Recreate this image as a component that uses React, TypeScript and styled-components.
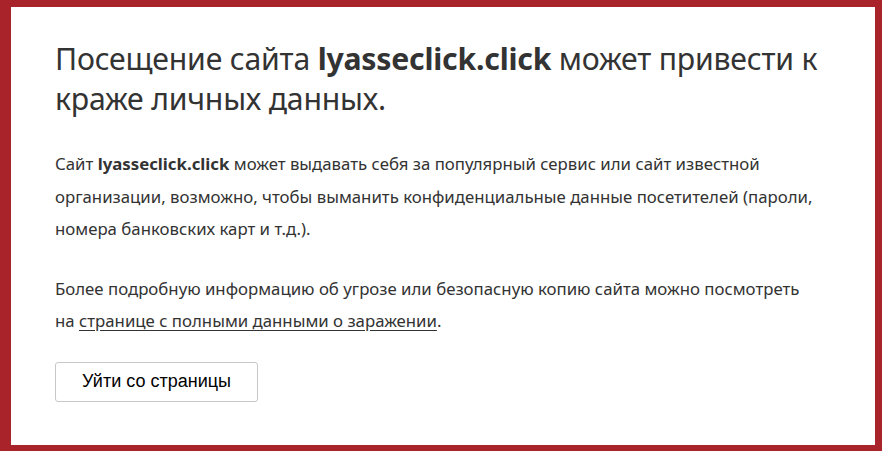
import styled, { createGlobalStyle } from "styled-components";

const GlobalStyle = createGlobalStyle`
	html, body {
		margin: 0;
		padding: 0;
		background: #a8232a;
	}
	body {
		font-family: "Noto Sans", "Open Sans", sans-serif;
		color: #333;
	}
`;

const DOMAIN = "lyasseclick.click";

export default function App() {
	return (
		<>
			<GlobalStyle />
			<Frame>
				<Panel>
					<Content>
						<Title>
							Посещение сайта <b>{DOMAIN}</b> может привести к<br />
							краже личных данных.
						</Title>
						<Text>
							Сайт <b>{DOMAIN}</b> может выдавать себя за популярный сервис или сайт известной
							<br />
							организации, возможно, чтобы выманить конфиденциальные данные посетителей (пароли,
							<br />
							номера банковских карт и т.д.).
						</Text>
						<Text>
							Более подробную информацию об угрозе или безопасную копию сайта можно посмотреть
							<br />
							на <InfoLink href="#">странице с полными данными о заражении</InfoLink>.
						</Text>
						<LeaveBtn type="button">Уйти со страницы</LeaveBtn>
					</Content>
				</Panel>
			</Frame>
		</>
	);
}

const Frame = styled.div`
	height: 451px;
	box-sizing: border-box;
	padding: 7px 7px 6px 11px;
	display: flex;
`;

const Panel = styled.main`
	flex: 1;
	background: #fff;
	overflow: hidden;
`;

const Content = styled.div`
	padding: 32px 20px 0 44px;
	display: flex;
	flex-direction: column;
	align-items: flex-start;
`;

const Title = styled.h1`
	margin: 0 0 29px;
	font-size: 30.2px;
	font-weight: 400;
	line-height: 40px;
	letter-spacing: -0.2px;
	color: #333;
	white-space: nowrap;
	b {
		font-weight: 700;
	}
`;

const Text = styled.p`
	margin: 0 0 27px;
	font-size: 16.8px;
	line-height: 32.5px;
	color: #333;
	white-space: nowrap;
	b {
		font-weight: 700;
	}
`;

const InfoLink = styled.a`
	color: #333;
	text-decoration: underline;
	text-underline-offset: 3px;
`;

const LeaveBtn = styled.button`
	margin-top: -3px;
	width: 203px;
	height: 40px;
	background: #fff;
	border: 1px solid #c8c8c8;
	border-radius: 3px;
	font-family: "Liberation Sans", Arial, sans-serif;
	font-size: 18px;
	color: #000;
	cursor: pointer;
`;
